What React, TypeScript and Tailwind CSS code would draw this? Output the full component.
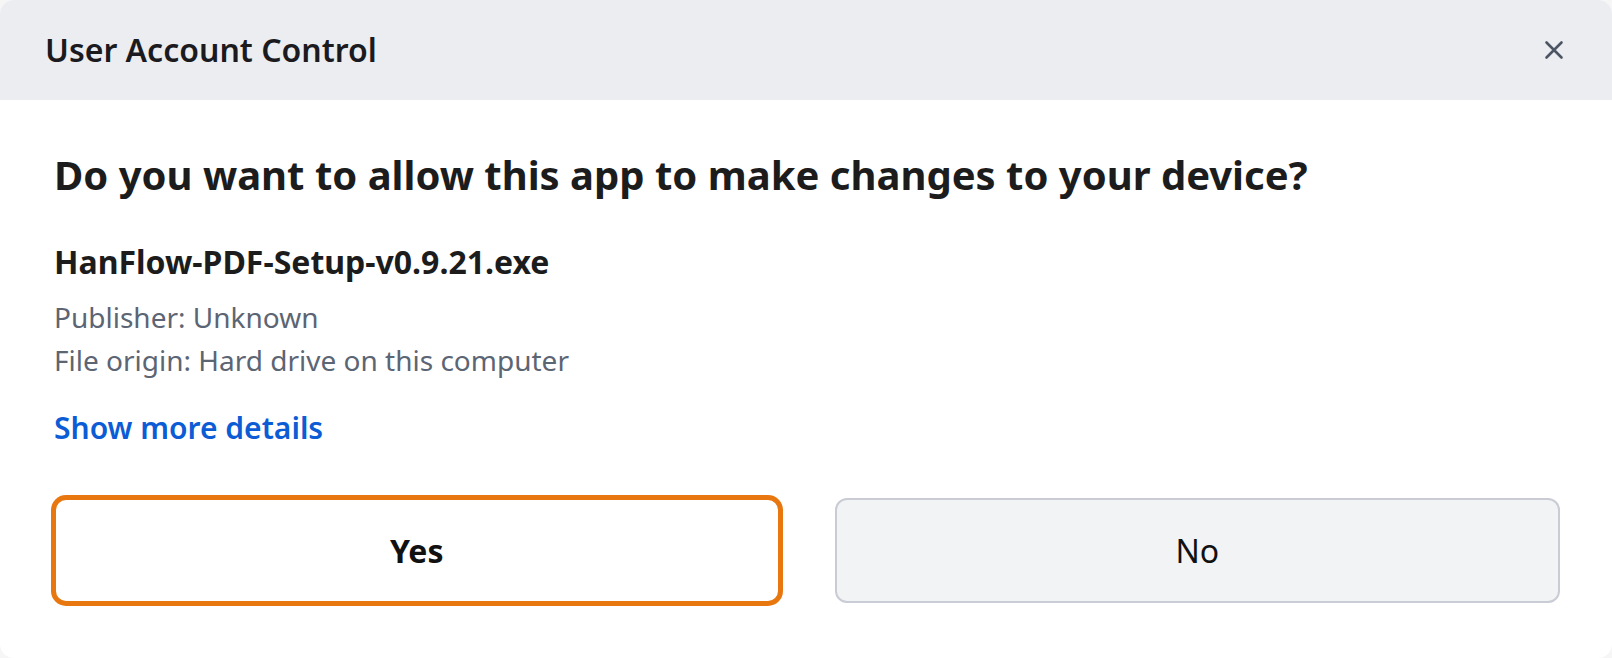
import React from 'react';

const font = { fontFamily: '"Noto Sans", "Open Sans", sans-serif' };

// Close glyph for the title bar
const CloseIcon = () => (
  <svg width="22" height="22" viewBox="0 0 22 22" fill="none" stroke="currentColor" strokeWidth="2.6" strokeLinecap="round">
    <path d="M3.5 3.5 L18.5 18.5 M18.5 3.5 L3.5 18.5" />
  </svg>
);

const App = () => (
  <div className="w-full h-[658px] bg-[#f6f6f7]" style={font}>
    <div className="h-full flex flex-col bg-white rounded-[14px] overflow-hidden">
      {/* Title bar */}
      <header className="h-[100px] shrink-0 bg-[#ecedf1] flex items-center justify-between pl-[45px] pr-[43px]">
        <h1 className="text-[32px] font-semibold text-[#1b1b1f] leading-none">User Account Control</h1>
        <button className="w-[30px] h-[30px] flex items-center justify-center text-[#4b5563]">
          <CloseIcon />
        </button>
      </header>

      {/* Body */}
      <main className="flex-1 flex flex-col pl-[54px] pr-[52px] pt-[51px]">
        <h2 className="text-[40px] font-bold text-[#1c1c1c] leading-[1.2]">
          Do you want to allow this app to make changes to your device?
        </h2>
        <p className="mt-[44px] text-[32px] font-bold text-[#1c1c1c] leading-[1.2]">HanFlow-PDF-Setup-v0.9.21.exe</p>
        <div className="mt-[15px] text-[28px] text-[#5c6573] leading-[43px]">
          <p>Publisher: Unknown</p>
          <p>File origin: Hard drive on this computer</p>
        </div>
        <a href="#" className="mt-[28px] text-[30px] font-semibold text-[#0b5cd5] leading-[1.2] self-start">
          Show more details
        </a>
        <div className="mt-[52px] grid grid-cols-2 gap-[55px]">
          <button className="h-[105px] rounded-[12px] border-2 border-[#e8770f] ring-[3px] ring-[#e8770f] bg-white text-[32px] font-bold text-[#111]">
            Yes
          </button>
          <button className="h-[105px] rounded-[12px] border-2 border-[#c9ccd5] bg-[#f2f3f5] text-[32px] text-[#111]">
            No
          </button>
        </div>
      </main>
    </div>
  </div>
);

export default App;
